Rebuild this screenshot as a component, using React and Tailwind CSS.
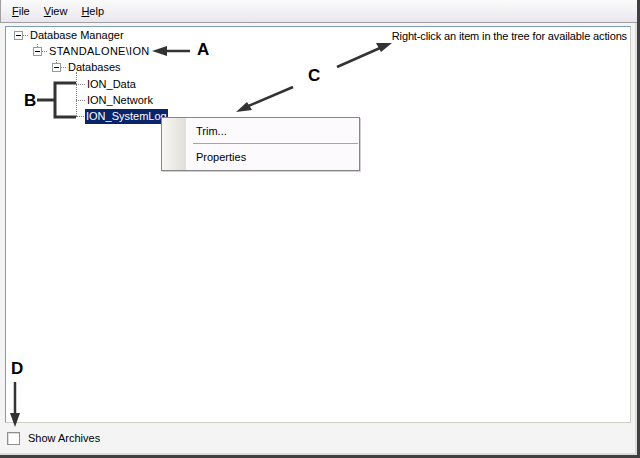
import React from 'react';

const Expander = () => (
    <span className="relative w-[9px] h-[9px] border border-[#919b9c] bg-white shrink-0">
        <span className="absolute left-[1px] right-[1px] top-[3px] h-px bg-black" />
    </span>
);

const Dots = ({ w = 6 }) => (
    <span className="border-t border-dotted border-[#808080] shrink-0" style={{ width: w }} />
);

const App = () => {
    return (
        <div className="w-[640px] h-[458px] relative bg-[#f4f4f4] border-r-[3px] border-b-[3px] border-[#404040] shadow-[inset_-2px_-2px_0_#dcdcdc] font-['Liberation_Sans',Arial,sans-serif] text-[11px] text-black overflow-hidden">
            {/* Menu bar */}
            <div className="h-[23px] bg-gradient-to-b from-[#fbfbfb] to-[#e9e7ee] border-b border-[#8c8c8c] border-l border-[#a0a0a0] flex items-center pl-[11px] gap-[14px]">
                <span><span className="underline">F</span>ile</span>
                <span><span className="underline">V</span>iew</span>
                <span><span className="underline">H</span>elp</span>
            </div>

            <div className="pt-[3px] pl-[5px] pr-[6px]">
                {/* Tree panel */}
                <div className="relative h-[397px] bg-white border-t border-l border-[#7f9db9] border-r border-b border-r-[#cdcdc6] border-b-[#cdcdc6]">
                    <div className="absolute right-[3px] top-[1px] h-[16px] flex items-center tracking-[-0.13px]">
                        Right-click an item in the tree for available actions
                    </div>

                    <div className="flex flex-col">
                        <div className="h-[16px] flex items-center pl-[8px]">
                            <Expander />
                            <Dots w={5} />
                            <span className="ml-[2px]">Database Manager</span>
                        </div>
                        <div className="h-[16px] flex items-center pl-[27px] relative">
                            <span className="absolute left-[31px] top-[1px] h-[3px] border-l border-dotted border-[#808080]" />
                            <Expander />
                            <Dots w={5} />
                            <span className="ml-[2px] tracking-[0.3px]">STANDALONE\ION</span>
                        </div>
                        <div className="h-[16px] flex items-center pl-[46px] relative">
                            <span className="absolute left-[50px] top-[1px] h-[3px] border-l border-dotted border-[#808080]" />
                            <Expander />
                            <Dots w={5} />
                            <span className="ml-[2px]">Databases</span>
                        </div>
                        <div className="relative pl-[70px] pt-px">
                            <span className="absolute left-[70px] top-[-3px] h-[44px] border-l border-dotted border-[#808080]" />
                            <div className="h-[16px] flex items-center">
                                <Dots w={9} />
                                <span className="ml-px px-[1px]">ION_Data</span>
                            </div>
                            <div className="h-[16px] flex items-center">
                                <Dots w={9} />
                                <span className="ml-px px-[1px]">ION_Network</span>
                            </div>
                            <div className="h-[16px] flex items-center">
                                <Dots w={8} />
                                <span className="ml-px px-[1px] h-[15px] flex items-center bg-[#0a246a] text-white">ION_SystemLog</span>
                            </div>
                        </div>
                    </div>
                </div>
            </div>

            {/* Bottom bar */}
            <div className="h-[32px] flex items-center pl-[7px] gap-[8px] pb-[1px]">
                <span className="w-[13px] h-[13px] bg-white border border-[#8e8f8f] shadow-[inset_1px_1px_0_#dcdcdc]" />
                <span>Show Archives</span>
            </div>

            {/* Context menu */}
            <div className="absolute left-[161px] top-[117px] w-[199px] h-[54px] bg-[#fcfafc] border border-[#868686] flex shadow-[1px_1px_0_#d0d0d0]">
                <div className="w-[24px] bg-gradient-to-r from-[#f7f6f3] to-[#e2dfda]" />
                <div className="flex-1 flex flex-col pl-[10px] pr-px">
                    <div className="h-[25px] flex items-center pt-[1px]">Trim...</div>
                    <div className="h-px bg-[#a6a6a6] ml-[-3px]" />
                    <div className="h-[26px] flex items-center">Properties</div>
                </div>
            </div>

            {/* Annotation letters */}
            <span className="absolute left-[197px] top-[41px] text-[17px] font-bold leading-none">A</span>
            <span className="absolute left-[24px] top-[92px] text-[17px] font-bold leading-none">B</span>
            <span className="absolute left-[308px] top-[67px] text-[17px] font-bold leading-none">C</span>
            <span className="absolute left-[11px] top-[360px] text-[17px] font-bold leading-none">D</span>

            {/* Annotation arrows */}
            <svg className="absolute left-0 top-0 pointer-events-none" width="640" height="458">
                <g stroke="#333" strokeWidth="2.5" fill="none">
                    <line x1="190" y1="51" x2="162" y2="51" />
                    <polyline points="37,100 55,100" strokeWidth="3" />
                    <polyline points="76,83 55,83 55,117 76,117" strokeWidth="3" />
                    <line x1="337" y1="67" x2="380" y2="48" />
                    <line x1="293" y1="87" x2="246" y2="107" />
                    <line x1="15" y1="382" x2="15" y2="416" />
                </g>
                <g fill="#333">
                    <polygon points="152,51 167,46 167,56" />
                    <polygon points="392,43 376,43 381,52" />
                    <polygon points="236,112 247,102 252,110" />
                    <polygon points="15,427 10,413 20,413" />
                </g>
            </svg>
        </div>
    );
};

export default App;
